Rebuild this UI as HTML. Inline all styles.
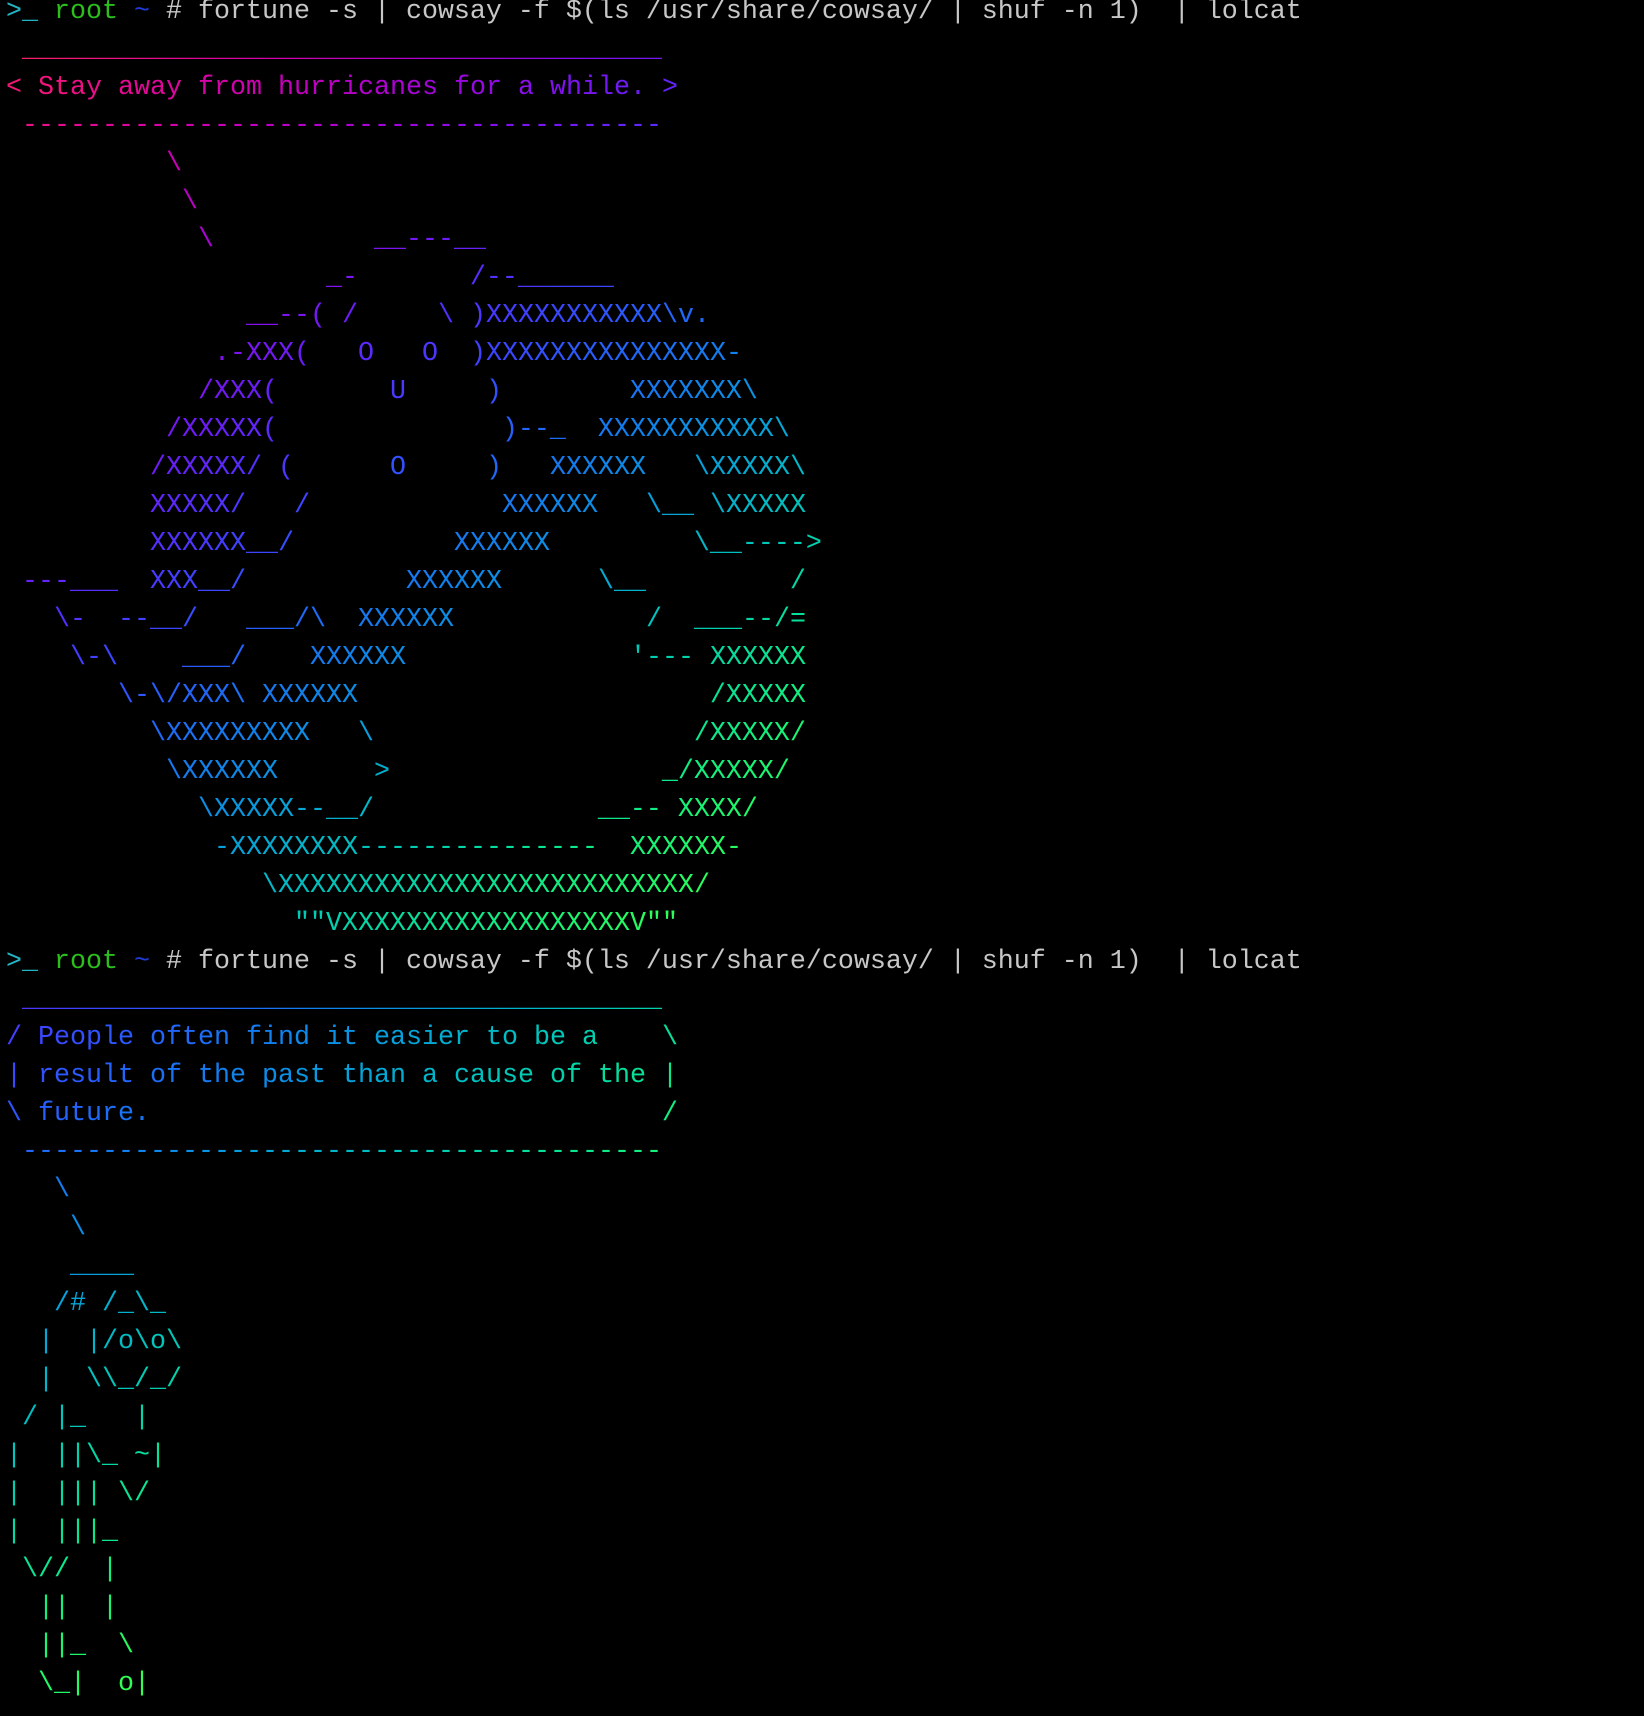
<!DOCTYPE html>
<html><head><meta charset="utf-8">
<style>
html,body{margin:0;padding:0;background:#000;width:1644px;height:1716px;overflow:hidden}
#wrap{margin-top:-7px;padding-left:6px}
pre,.p{font-family:"Liberation Mono","DejaVu Sans Mono",monospace;font-size:26.67px;line-height:38px;margin:0;white-space:pre;color:#c7c7c7}
.c{color:#22b5c4}.g{color:#2bbf1c}.b{color:#1e3bd4}
</style></head><body><div id="wrap">
<div class="p"><span class="c">&gt;_</span> <span class="g">root</span> <span class="b">~</span> # fortune -s | cowsay -f $(ls /usr/share/cowsay/ | shuf -n 1)  | lolcat</div>
<pre class="lol" data-t="1.9"> ________________________________________
&lt; Stay away from hurricanes for a while. &gt;
 ----------------------------------------
          \
           \
            \          __---__
                    _-       /--______
               __--( /     \ )XXXXXXXXXXX\v.
             .-XXX(   O   O  )XXXXXXXXXXXXXXX-
            /XXX(       U     )        XXXXXXX\
          /XXXXX(              )--_  XXXXXXXXXXX\
         /XXXXX/ (      O     )   XXXXXX   \XXXXX\
         XXXXX/   /            XXXXXX   \__ \XXXXX
         XXXXXX__/          XXXXXX         \__----&gt;
 ---___  XXX__/          XXXXXX      \__         /
   \-  --__/   ___/\  XXXXXX            /  ___--/=
    \-\    ___/    XXXXXX              '--- XXXXXX
       \-\/XXX\ XXXXXX                      /XXXXX
         \XXXXXXXXX   \                    /XXXXX/
          \XXXXXX      &gt;                 _/XXXXX/
            \XXXXX--__/              __-- XXXX/
             -XXXXXXXX---------------  XXXXXX-
                \XXXXXXXXXXXXXXXXXXXXXXXXXX/
                  ""VXXXXXXXXXXXXXXXXXXV""</pre>
<div class="p"><span class="c">&gt;_</span> <span class="g">root</span> <span class="b">~</span> # fortune -s | cowsay -f $(ls /usr/share/cowsay/ | shuf -n 1)  | lolcat</div>
<pre class="lol" data-t="3.55"> ________________________________________
/ People often find it easier to be a    \
| result of the past than a cause of the |
\ future.                                /
 ----------------------------------------
   \
    \
    ____
   /# /_\_
  |  |/o\o\
  |  \\_/_/
 / |_   |
|  ||\_ ~|
|  ||| \/
|  |||_
 \//  |
  ||  |
  ||_  \
  \_|  o|</pre>
</div>
<script>
document.querySelectorAll('pre.lol').forEach(function(p){
  var t0=parseFloat(p.getAttribute('data-t'));
  var lines=p.textContent.split('\n');
  var out=[];
  lines.forEach(function(line,l){
    var s='';
    for(var c=0;c<line.length;c++){
      var ch=line[c];
      if(ch===' '){s+=' ';continue;}
      var th=t0+0.1*l+c/30;
      var r=Math.round(Math.sin(th)*127+128),
          g=Math.round(Math.sin(th+2.0944)*127+128),
          b=Math.round(Math.sin(th+4.1888)*127+128);
      var e=ch==='<'?'&lt;':ch==='>'?'&gt;':ch==='&'?'&amp;':ch;
      s+='<span style="color:rgb('+r+','+g+','+b+')">'+e+'</span>';
    }
    out.push(s);
  });
  p.innerHTML=out.join('\n');
});
</script>
</body></html>
